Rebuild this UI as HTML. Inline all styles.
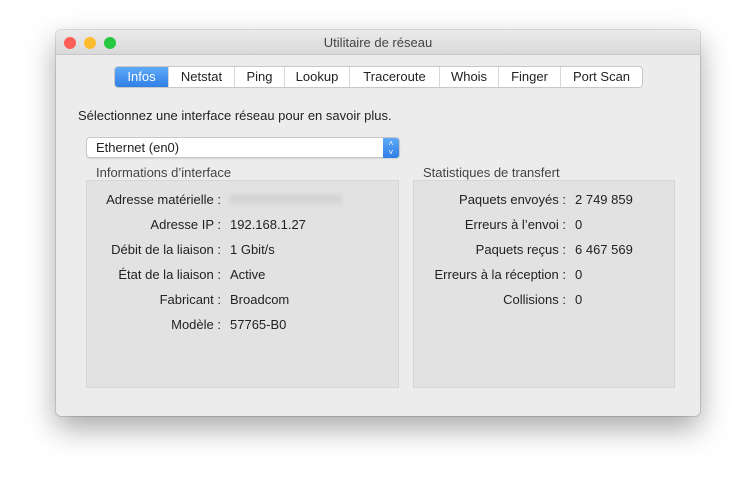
<!DOCTYPE html>
<html><head><meta charset="utf-8"><style>
body{margin:0;width:756px;height:497px;background:#fff;font-family:"Liberation Sans",sans-serif;font-size:13px;color:#222;position:relative;overflow:hidden}
.win{position:absolute;left:56px;top:30px;width:644px;height:386px;background:#ececec;border-radius:5px;box-shadow:0 12px 30px rgba(0,0,0,.35),0 0 0 1px rgba(0,0,0,.12);overflow:hidden}
.tb{position:absolute;left:0;top:0;width:644px;height:24px;background:linear-gradient(#ebebeb,#d9d9d9);border-bottom:1px solid #c8c8c8;text-align:center;line-height:26px;color:#444}
.dot{position:absolute;top:7px;width:12px;height:12px;border-radius:50%}
.a{position:absolute;white-space:nowrap}
.tabs{position:absolute;left:58px;top:36px;height:20px;display:flex;border:1px solid #c8c8c8;border-radius:4px;background:#fff;overflow:hidden}
.tabs div{line-height:20px;text-align:center;border-left:1px solid #d8d8d8}
.tabs div:first-child{border:none;background:linear-gradient(#5ea9f7,#2f7fe6);color:#fff}
.panel{position:absolute;top:150px;height:206px;background:#e2e2e2;border:1px solid #d6d6d6}
.r{text-align:right}
</style></head><body>
<div class="win">
<div class="tb">Utilitaire de réseau
<div class="dot" style="left:8px;background:#fc5f57"></div>
<div class="dot" style="left:28px;background:#fdbc2e"></div>
<div class="dot" style="left:48px;background:#28c840"></div>
</div>
<div class="tabs">
<div style="width:53px">Infos</div><div style="width:65px">Netstat</div><div style="width:49px">Ping</div><div style="width:64px">Lookup</div><div style="width:89px">Traceroute</div><div style="width:58px">Whois</div><div style="width:61px">Finger</div><div style="width:81px">Port Scan</div>
</div>
<div class="a" style="left:22px;top:78px">Sélectionnez une interface réseau pour en savoir plus.</div>
<div class="a" style="left:30px;top:107px;width:312px;height:19px;background:#fff;border:1px solid #c8c8c8;border-radius:4px;box-shadow:0 1px 1px rgba(0,0,0,.1)"><span style="position:absolute;left:9px;top:2px">Ethernet (en0)</span><div style="position:absolute;right:0;top:0;width:16px;height:19px;background:linear-gradient(#5ea9f7,#2f7fe6);border-radius:0 3px 3px 0;color:#fff;font-size:8px;text-align:center;line-height:9px;padding-top:1px">˄<br>˅</div></div>
<div class="a" style="left:40px;top:135px;color:#444">Informations d’interface</div>
<div class="a" style="left:367px;top:135px;color:#444">Statistiques de transfert</div>
<div class="panel" style="left:30px;width:311px"></div>
<div class="panel" style="left:357px;width:260px"></div>
<div class="a r" style="left:0;width:165px;top:157px;line-height:25px">Adresse matérielle :<br>Adresse IP :<br>Débit de la liaison :<br>État de la liaison :<br>Fabricant :<br>Modèle :</div>
<div class="a" style="left:174px;top:157px;line-height:25px"><span style="display:inline-block;width:112px;height:10px;background:#d4d4d4;filter:blur(2px)"></span><br>192.168.1.27<br>1 Gbit/s<br>Active<br>Broadcom<br>57765-B0</div>
<div class="a r" style="left:300px;width:210px;top:157px;line-height:25px">Paquets envoyés :<br>Erreurs à l’envoi :<br>Paquets reçus :<br>Erreurs à la réception :<br>Collisions :</div>
<div class="a" style="left:519px;top:157px;line-height:25px">2 749 859<br>0<br>6 467 569<br>0<br>0</div>
</div>
</body></html>
